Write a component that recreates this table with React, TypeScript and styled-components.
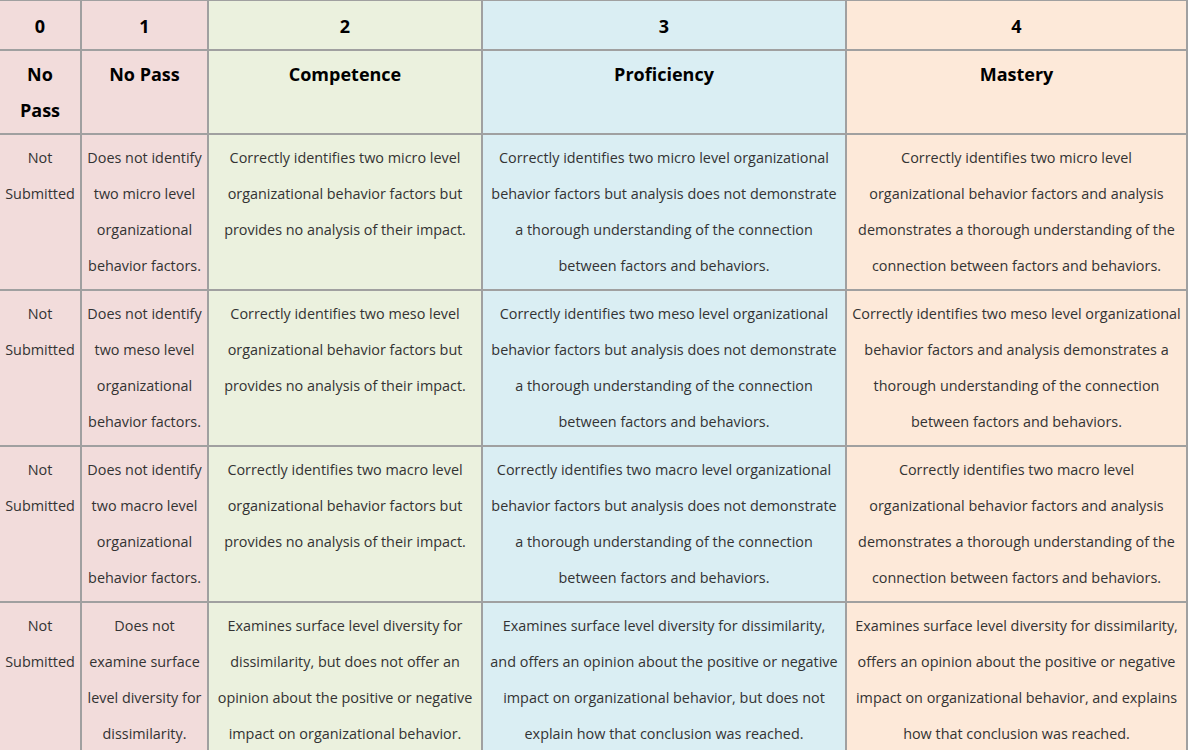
import React from "react";
import styled, { createGlobalStyle } from "styled-components";

const GlobalStyle = createGlobalStyle`
  html, body {
    margin: 0;
    padding: 0;
    overflow: hidden;
    background: #ffffff;
  }
  body {
    font-family: "Open Sans", "Liberation Sans", Arial, sans-serif;
  }
`;

type Tone = "pink" | "green" | "blue" | "peach";

const toneColor: Record<Tone, string> = {
  pink: "#f2dcdb",
  green: "#ebf1de",
  blue: "#daeef3",
  peach: "#fde9d9",
};

const Viewport = styled.div`
  width: 1188px;
  height: 750px;
  overflow: hidden;
`;

const Grid = styled.div`
  display: grid;
  grid-template-columns: 82px 127px 274px 364px 341px;
  width: 1190px;
  margin: -1px 0 0 -2px;
  border-top: 2px solid #a0a0a0;
  border-left: 2px solid #a0a0a0;
  box-sizing: border-box;
`;

const Cell = styled.div<{ $tone: Tone }>`
  background: ${(p) => toneColor[p.$tone]};
  border-right: 2px solid #a0a0a0;
  border-bottom: 2px solid #a0a0a0;
  text-align: center;
  box-sizing: border-box;
  min-width: 0;
`;

const ScoreCell = styled(Cell)`
  padding: 7px 8px 5px;
  font-size: 18px;
  font-weight: 700;
  line-height: 36px;
  color: #000000;
`;

const LevelCell = styled(Cell)`
  padding: 5px 8px;
  font-size: 18px;
  font-weight: 700;
  line-height: 36px;
  color: #000000;
`;

const BodyCell = styled(Cell)`
  padding: 5px 5px;
  font-size: 14.4px;
  font-weight: 400;
  line-height: 36px;
  color: #333333;
`;

const tones: Tone[] = ["pink", "pink", "green", "blue", "peach"];
const scores = ["0", "1", "2", "3", "4"];
const levels = ["No Pass", "No Pass", "Competence", "Proficiency", "Mastery"];

const rows: string[][] = [
  [
    "Not Submitted",
    "Does not identify two micro level organizational behavior factors.",
    "Correctly identifies two micro level organizational behavior factors but provides no analysis of their impact.",
    "Correctly identifies two micro level organizational behavior factors but analysis does not demonstrate a thorough understanding of the connection between factors and behaviors.",
    "Correctly identifies two micro level organizational behavior factors and analysis demonstrates a thorough understanding of the connection between factors and behaviors.",
  ],
  [
    "Not Submitted",
    "Does not identify two meso level organizational behavior factors.",
    "Correctly identifies two meso level organizational behavior factors but provides no analysis of their impact.",
    "Correctly identifies two meso level organizational behavior factors but analysis does not demonstrate a thorough understanding of the connection between factors and behaviors.",
    "Correctly identifies two meso level organizational behavior factors and analysis demonstrates a thorough understanding of the connection between factors and behaviors.",
  ],
  [
    "Not Submitted",
    "Does not identify two macro level organizational behavior factors.",
    "Correctly identifies two macro level organizational behavior factors but provides no analysis of their impact.",
    "Correctly identifies two macro level organizational behavior factors but analysis does not demonstrate a thorough understanding of the connection between factors and behaviors.",
    "Correctly identifies two macro level organizational behavior factors and analysis demonstrates a thorough understanding of the connection between factors and behaviors.",
  ],
  [
    "Not Submitted",
    "Does not examine surface level diversity for dissimilarity.",
    "Examines surface level diversity for dissimilarity, but does not offer an opinion about the positive or negative impact on organizational behavior.",
    "Examines surface level diversity for dissimilarity, and offers an opinion about the positive or negative impact on organizational behavior, but does not explain how that conclusion was reached.",
    "Examines surface level diversity for dissimilarity, offers an opinion about the positive or negative impact on organizational behavior, and explains how that conclusion was reached.",
  ],
];

export default function App() {
  return (
    <>
      <GlobalStyle />
      <Viewport>
        <Grid>
          {scores.map((s, i) => (
            <ScoreCell key={`s${i}`} $tone={tones[i]}>
              {s}
            </ScoreCell>
          ))}
          {levels.map((l, i) => (
            <LevelCell key={`l${i}`} $tone={tones[i]}>
              {l}
            </LevelCell>
          ))}
          {rows.map((row, r) =>
            row.map((text, c) => (
              <BodyCell key={`r${r}c${c}`} $tone={tones[c]}>
                {text}
              </BodyCell>
            ))
          )}
        </Grid>
      </Viewport>
    </>
  );
}
